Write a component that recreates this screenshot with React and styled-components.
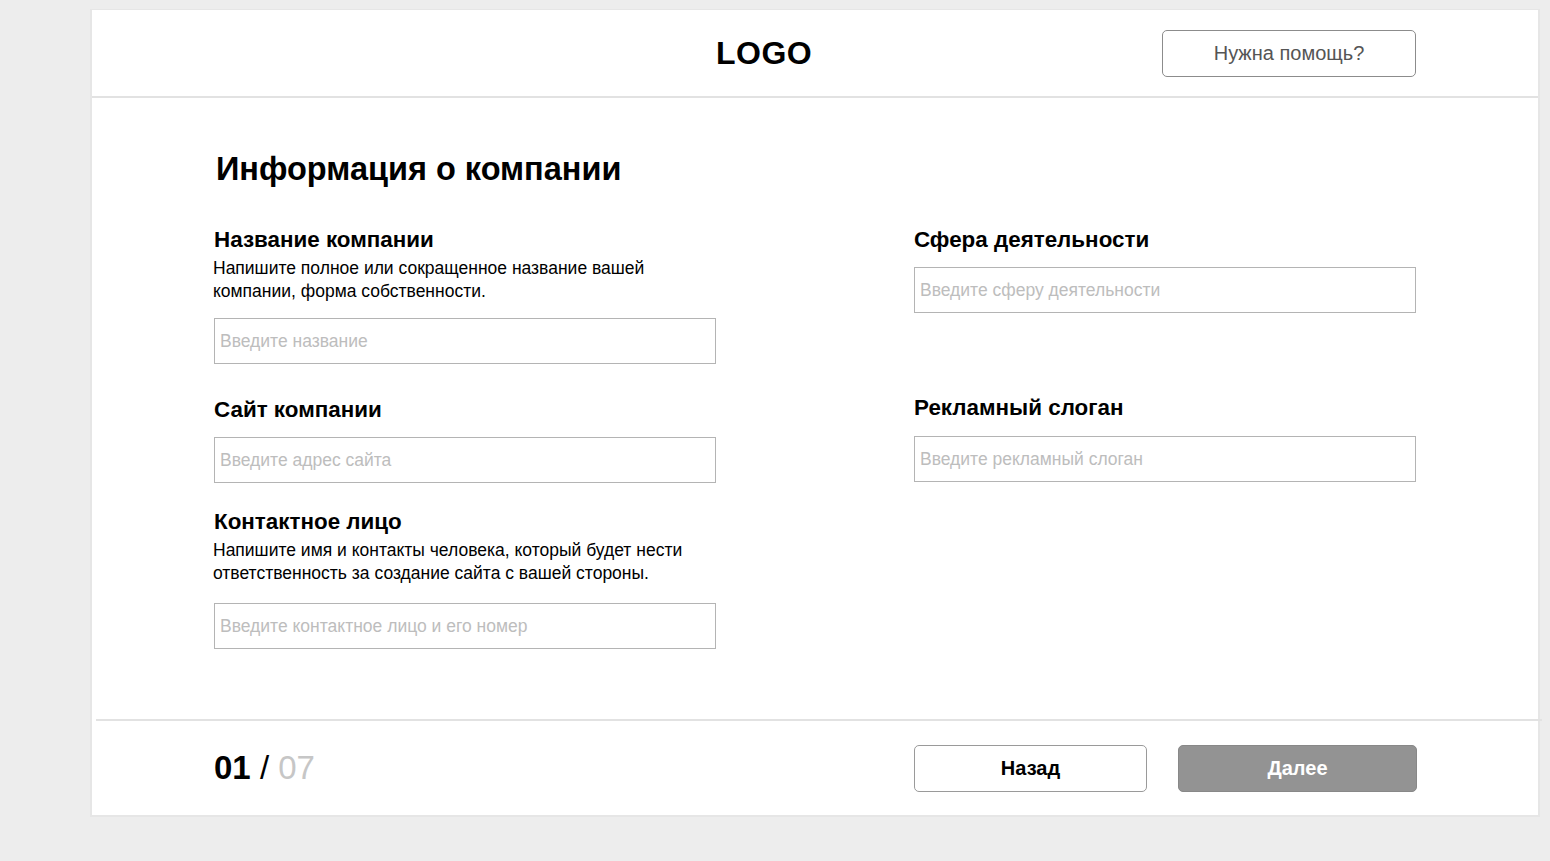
import React from "react";
import styled, { createGlobalStyle } from "styled-components";

const GlobalStyle = createGlobalStyle`
	* {
		box-sizing: border-box;
	}
	body {
		margin: 0;
		background: #ededed;
		font-family: "Liberation Sans", Arial, sans-serif;
		color: #000;
	}
`;

const Page = styled.div`
	min-height: 861px;
	padding-top: 9px;
	padding-left: 90px;
`;

const Card = styled.div`
	width: 1450px;
	background: #fff;
	border: 2px solid #e6e6e6;
	border-top-width: 1px;
`;

const Header = styled.header`
	height: 88px;
	display: grid;
	grid-template-columns: 502px 1fr auto;
	align-items: center;
	padding: 0 122px 0 122px;
	border-bottom: 2px solid #e2e2e2;
`;

const Logo = styled.div`
	grid-column: 2;
	font-size: 32px;
	font-weight: 700;
	letter-spacing: 0.5px;
`;

const HelpButton = styled.button`
	width: 254px;
	height: 47px;
	background: #fff;
	border: 1.5px solid #8c8c8c;
	border-radius: 5px;
	font-family: inherit;
	font-size: 20px;
	color: #555;
	cursor: pointer;
`;

const Main = styled.main`
	padding: 51px 122px 70px 122px;
`;

const Title = styled.h1`
	margin: 0 0 38px 2px;
	font-size: 32.5px;
	line-height: 40px;
	font-weight: 700;
`;

const Columns = styled.div`
	display: grid;
	grid-template-columns: 502px 502px;
	column-gap: 198px;
	align-items: start;
`;

const Column = styled.div`
	display: flex;
	flex-direction: column;
`;

const Field = styled.div`
	display: flex;
	flex-direction: column;
	margin-top: ${(p) => p.$mt || 0}px;
`;

const Label = styled.label`
	font-size: 22.4px;
	line-height: 26px;
	font-weight: 700;
`;

const Hint = styled.p`
	margin: 4px 0 0 -1px;
	font-size: 17.5px;
	line-height: 23px;
	width: 490px;
`;

const Input = styled.input`
	margin-top: ${(p) => p.$mt || 14}px;
	height: 46px;
	width: 100%;
	border: 1.5px solid #b4b4b4;
	padding: 0 5px;
	font-family: inherit;
	font-size: 17.5px;
	color: #000;
	outline: none;

	&::placeholder {
		color: #bdbdbd;
	}
`;

const Footer = styled.footer`
	height: 96px;
	display: grid;
	grid-template-columns: 700px 1fr;
	align-items: center;
	padding: 0 121px 0 118px;
	border-top: 2px solid #e2e2e2;
	margin-left: 4px;
	margin-right: -4px;
`;

const Steps = styled.div`
	font-size: 33px;
	font-weight: 700;

	span {
		font-weight: 400;
	}

	.total {
		color: #c6c6c6;
	}
`;

const Buttons = styled.div`
	display: flex;
	gap: 31px;
`;

const NavButton = styled.button`
	width: ${(p) => p.$w}px;
	height: 47px;
	border-radius: 5px;
	border: 1.5px solid ${(p) => (p.$primary ? "#888" : "#9a9a9a")};
	background: ${(p) => (p.$primary ? "#939393" : "#fff")};
	color: ${(p) => (p.$primary ? "#fff" : "#000")};
	font-family: inherit;
	font-size: 20px;
	font-weight: 700;
	cursor: pointer;
`;

const App = () => {
	return (
		<>
			<GlobalStyle />
			<Page>
				<Card>
					<Header>
						<Logo>LOGO</Logo>
						<HelpButton>Нужна помощь?</HelpButton>
					</Header>
					<Main>
						<Title>Информация о компании</Title>
						<Columns>
							<Column>
								<Field>
									<Label>Название компании</Label>
									<Hint>
										Напишите полное или сокращенное название вашей компании,
										форма собственности.
									</Hint>
									<Input $mt={15} placeholder="Введите название" />
								</Field>
								<Field $mt={33}>
									<Label>Сайт компании</Label>
									<Input placeholder="Введите адрес сайта" />
								</Field>
								<Field $mt={26}>
									<Label>Контактное лицо</Label>
									<Hint>
										Напишите имя и контакты человека, который будет нести
										ответственность за создание сайта с вашей стороны.
									</Hint>
									<Input $mt={18} placeholder="Введите контактное лицо и его номер" />
								</Field>
							</Column>
							<Column>
								<Field>
									<Label>Сфера деятельности</Label>
									<Input placeholder="Введите сферу деятельности" />
								</Field>
								<Field $mt={82}>
									<Label>Рекламный слоган</Label>
									<Input $mt={15} placeholder="Введите рекламный слоган" />
								</Field>
							</Column>
						</Columns>
					</Main>
					<Footer>
						<Steps>
							01 <span>/</span> <span className="total">07</span>
						</Steps>
						<Buttons>
							<NavButton $w={233}>Назад</NavButton>
							<NavButton $w={239} $primary>
								Далее
							</NavButton>
						</Buttons>
					</Footer>
				</Card>
			</Page>
		</>
	);
};

export default App;
